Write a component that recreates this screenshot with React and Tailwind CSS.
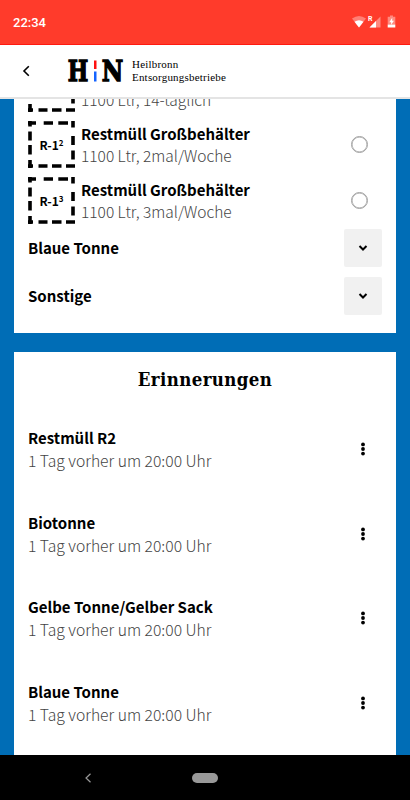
import React from 'react';

const sans = "font-['Noto_Sans_CJK_SC',sans-serif]";

// the first row is scrolled under the header, only its info line is left
const bins = [
  { id: 1, info: '1100 Ltr, 14-täglich' },
  { id: 2, code: '2', title: 'Restmüll Großbehälter', info: '1100 Ltr, 2mal/Woche' },
  { id: 3, code: '3', title: 'Restmüll Großbehälter', info: '1100 Ltr, 3mal/Woche' },
];

const groups = ['Blaue Tonne', 'Sonstige'];

const reminders = ['Restmüll R2', 'Biotonne', 'Gelbe Tonne/Gelber Sack', 'Blaue Tonne'];

const StatusBar = () => (
  <div className="flex h-[45px] shrink-0 items-center justify-between border-b border-[#ff1a10] bg-[#ff3b2b] pl-[13px] pr-[12px]">
    <span className="font-[Roboto,sans-serif] text-[13px] font-medium leading-none text-white">22:34</span>
    <svg width="47" height="16" viewBox="0 0 47 16" fill="#fff">
      <path d="M1 4.4Q8-.6 15 4.400L8 13.500Z" opacity=".35" />
      <path d="M3.500 7.700Q8 4.600 12.500 7.700L8 13.500Z" />
      <path d="M29.500 2.500V13.500H18.500Z" opacity=".4" />
      <path d="M25 7V13.500H18.500Z" />
      <text x="17" y="7" fontSize="7" fontWeight="700" fontFamily="Roboto, sans-serif">R</text>
      <path d="M39 1.500h3v1.200h2.300V10.500h-7.600V2.700H39Z" opacity=".4" />
      <path d="M36.700 10.500h7.600v3h-7.600ZM41.200 3.700L38.300 8.200h1.800v2.500L43 6.700h-1.800Z" />
    </svg>
  </div>
);

const Header = () => (
  <header className="flex h-[54px] shrink-0 items-center border-b-2 border-[#e4e4e4] bg-white">
    <svg className="ml-[22px]" width="9" height="12" viewBox="0 0 9 12" fill="none" stroke="#000" strokeWidth="1.6">
      <path d="M6.800 1.200L2 6L6.800 10.800" />
    </svg>
    <svg className="ml-[36px] overflow-visible" width="57" height="24" viewBox="0 0 57 24">
      <g fontFamily="DejaVu Serif, serif" fontWeight="700" fontSize="27" stroke="#000" strokeWidth="1.300">
        <text x="0.800" y="21.500" textLength="20.500" lengthAdjust="spacingAndGlyphs">H</text>
        <text x="34.800" y="21.500" textLength="21.500" lengthAdjust="spacingAndGlyphs">N</text>
      </g>
      <path fill="#f11" d="M27 1.500h2.500v8.500H27Z" />
      <path fill="#1463ff" d="M27 12.500h2.500v10H27Z" />
    </svg>
    <div className="ml-[8px] font-['Liberation_Serif',serif] text-[11px] leading-[13px] tracking-[0.200px] text-black">
      <div>Heilbronn</div>
      <div>Entsorgungsbetriebe</div>
    </div>
  </header>
);

const BinBadge = ({ code }) => (
  <div className="relative flex size-[47px] items-center justify-center">
    <svg className="absolute inset-0" width="47" height="47" viewBox="0 0 47 47" fill="none" stroke="#000" strokeWidth="3.600">
      <path d="M0 2H8M15.700 2H25M30.300 2H40" />
      <path d="M45 0V6.500M45 15V24M45 29.500V38.500" />
      <path d="M47 45H38M33.500 45H24M19.500 45H10.500M5 45H0" />
      <path d="M2 47V39M2 33.500V24M2 19.500V10.500M2 5.500V0" />
    </svg>
    {code && (
      <span className="text-[12px] font-bold leading-none">
        R-1<sup className="text-[8px]">{code}</sup>
      </span>
    )}
  </div>
);

const BinRow = ({ code, title, info }) => (
  <div className="flex h-[56.200px] items-start">
    <BinBadge code={code} />
    <div className="ml-[6px] grow">
      <div className="h-[23px] text-[15px] font-bold leading-[26px]">{title}</div>
      <div className="text-[15.500px] font-light leading-[23px] text-[#444]">{info}</div>
    </div>
    <span className="mr-[14px] mt-[15px] size-[17px] rounded-full border-[1.500px] border-[#a0a0a0] shadow-[inset_0_0_0_0.500px_#a0a0a0]" />
  </div>
);

const GroupRow = ({ name }) => (
  <div className="mb-[10px] flex h-[38px] items-center justify-between">
    <span className="text-[15px] font-bold leading-none">{name}</span>
    <button className="flex size-[38px] items-center justify-center rounded-[2px] bg-[#f1f1f1]">
      <svg width="10" height="8" viewBox="0 0 10 8" fill="none" stroke="#000" strokeWidth="2">
        <path d="M1.500 2L5 5.500L8.500 2" />
      </svg>
    </button>
  </div>
);

const ReminderRow = ({ name }) => (
  <div className="flex h-[84.400px] items-start justify-between">
    <div>
      <div className="text-[15px] font-bold leading-[23px]">{name}</div>
      <div className="text-[15.700px] font-light leading-[23px] text-[#444]">1 Tag vorher um 20:00 Uhr</div>
    </div>
    <svg className="mr-[17px] mt-[16px]" width="4" height="14" viewBox="0 0 4 14">
      <circle cx="2" cy="2.400" r="1.900" />
      <circle cx="2" cy="7" r="1.900" />
      <circle cx="2" cy="11.600" r="1.900" />
    </svg>
  </div>
);

const NavBar = () => (
  <div className="flex h-[45px] shrink-0 items-center bg-black">
    <svg className="ml-[84px]" width="8" height="10" viewBox="0 0 8 10" fill="none" stroke="#999" strokeWidth="1.200">
      <path d="M6.500 .7L2 5L6.500 9.300" />
    </svg>
    <div className="ml-[100px] h-[10px] w-[26px] rounded-full bg-[#999]" />
  </div>
);

const App = () => (
  <div className={`flex h-[800px] w-[410px] flex-col overflow-hidden text-black ${sans}`}>
    <StatusBar />
    <Header />
    <main className="flex min-h-0 grow flex-col gap-[19px] overflow-hidden bg-[#006db6] px-[14px]">
      <section className="-mt-[34px] h-[268px] shrink-0 bg-white px-[14px]">
        {bins.map((bin) => (
          <BinRow key={bin.id} {...bin} />
        ))}
        <div className="-mt-[5px]">
          {groups.map((name) => (
            <GroupRow key={name} name={name} />
          ))}
        </div>
      </section>
      <section className="shrink-0 bg-white px-[14px]">
        <h2 className="pt-[14px] text-center font-['DejaVu_Serif_Condensed','DejaVu_Serif',serif] text-[18.500px] font-bold leading-[27px] tracking-[0.400px]">
          Erinnerungen
        </h2>
        <div className="mt-[33.400px]">
          {reminders.map((name) => (
            <ReminderRow key={name} name={name} />
          ))}
        </div>
      </section>
    </main>
    <NavBar />
  </div>
);

export default App;
